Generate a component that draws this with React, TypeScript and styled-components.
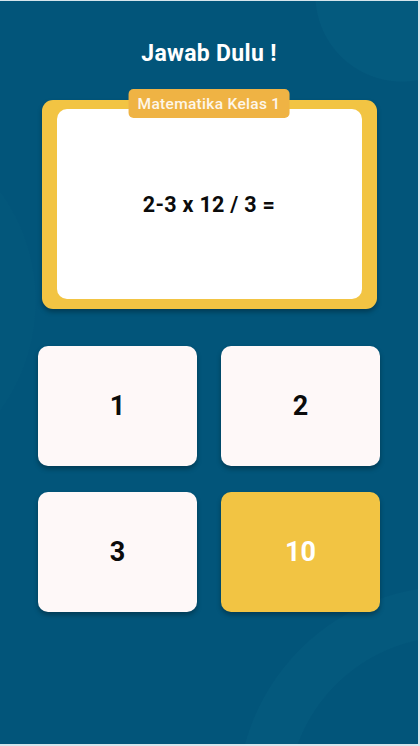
import styled, { createGlobalStyle } from 'styled-components';

const GlobalStyle = createGlobalStyle`
	html, body {
		margin: 0;
		padding: 0;
		background: #d6e5ec;
	}
	body {
		font-family: Roboto, 'Liberation Sans', Arial, sans-serif;
	}
`;

const answers = [
	{ label: '1', active: false },
	{ label: '2', active: false },
	{ label: '3', active: false },
	{ label: '10', active: true },
];

const App = () => (
	<>
		<GlobalStyle />
		<Screen>
			<Title>Jawab Dulu !</Title>
			<QuestionCard>
				<Tag>Matematika Kelas 1</Tag>
				<QuestionBody>
					<Question>2-3 x 12 / 3 =</Question>
				</QuestionBody>
			</QuestionCard>
			<AnswerGrid>
				{answers.map((a) => (
					<AnswerButton key={a.label} $active={a.active}>
						{a.label}
					</AnswerButton>
				))}
			</AnswerGrid>
		</Screen>
	</>
);

export default App;

// Styled Components
const Screen = styled.div`
	margin: 1px 2px 2px 0;
	width: 418px;
	height: 743px;
	box-sizing: border-box;
	display: flex;
	flex-direction: column;
	align-items: center;
	padding-top: 38px;
	overflow: hidden;
	background:
		radial-gradient(circle at 402px -6px, #045a7e 0 86px, transparent 87px),
		radial-gradient(circle at 452px 800px, transparent 0 164px, #04597d 165px 214px, transparent 215px),
		radial-gradient(circle at -150px 300px, #03577b 0 185px, transparent 186px),
		#02557a;
`;

const Title = styled.h1`
	margin: 0;
	color: #ffffff;
	font-size: 23px;
	font-weight: 700;
	line-height: 30px;
	letter-spacing: 0.3px;
`;

const QuestionCard = styled.div`
	position: relative;
	margin-top: 31px;
	width: 335px;
	height: 209px;
	box-sizing: border-box;
	padding: 9px 15px 10px;
	background: #f2c443;
	border-radius: 11px;
	box-shadow: 0 3px 5px rgba(0, 0, 0, 0.3);
`;

const Tag = styled.div`
	position: absolute;
	top: -11px;
	left: 50%;
	transform: translateX(-50%);
	height: 29px;
	padding: 0 9px;
	display: flex;
	align-items: center;
	white-space: nowrap;
	background: #efb344;
	border-radius: 5px;
	color: #fdf6ea;
	font-size: 15.5px;
	font-weight: 500;
	letter-spacing: 0.3px;
`;

const QuestionBody = styled.div`
	height: 100%;
	display: flex;
	align-items: center;
	justify-content: center;
	background: #ffffff;
	border-radius: 10px;
`;

const Question = styled.span`
	color: #0b0b0b;
	font-size: 21.5px;
	font-weight: 700;
	letter-spacing: 0.3px;
`;

const AnswerGrid = styled.div`
	margin-top: 37px;
	display: grid;
	grid-template-columns: 159px 159px;
	grid-auto-rows: 120px;
	column-gap: 24px;
	row-gap: 26px;
`;

const AnswerButton = styled.button<{ $active: boolean }>`
	display: flex;
	align-items: center;
	justify-content: center;
	border: none;
	border-radius: 10px;
	background: ${({ $active }) => ($active ? '#f2c443' : '#fef8f8')};
	color: ${({ $active }) => ($active ? '#ffffff' : '#0b0b0b')};
	font-family: Roboto, 'Liberation Sans', Arial, sans-serif;
	font-size: 27px;
	font-weight: 700;
	box-shadow: 0 3px 5px rgba(0, 0, 0, 0.3);
	cursor: pointer;
`;
